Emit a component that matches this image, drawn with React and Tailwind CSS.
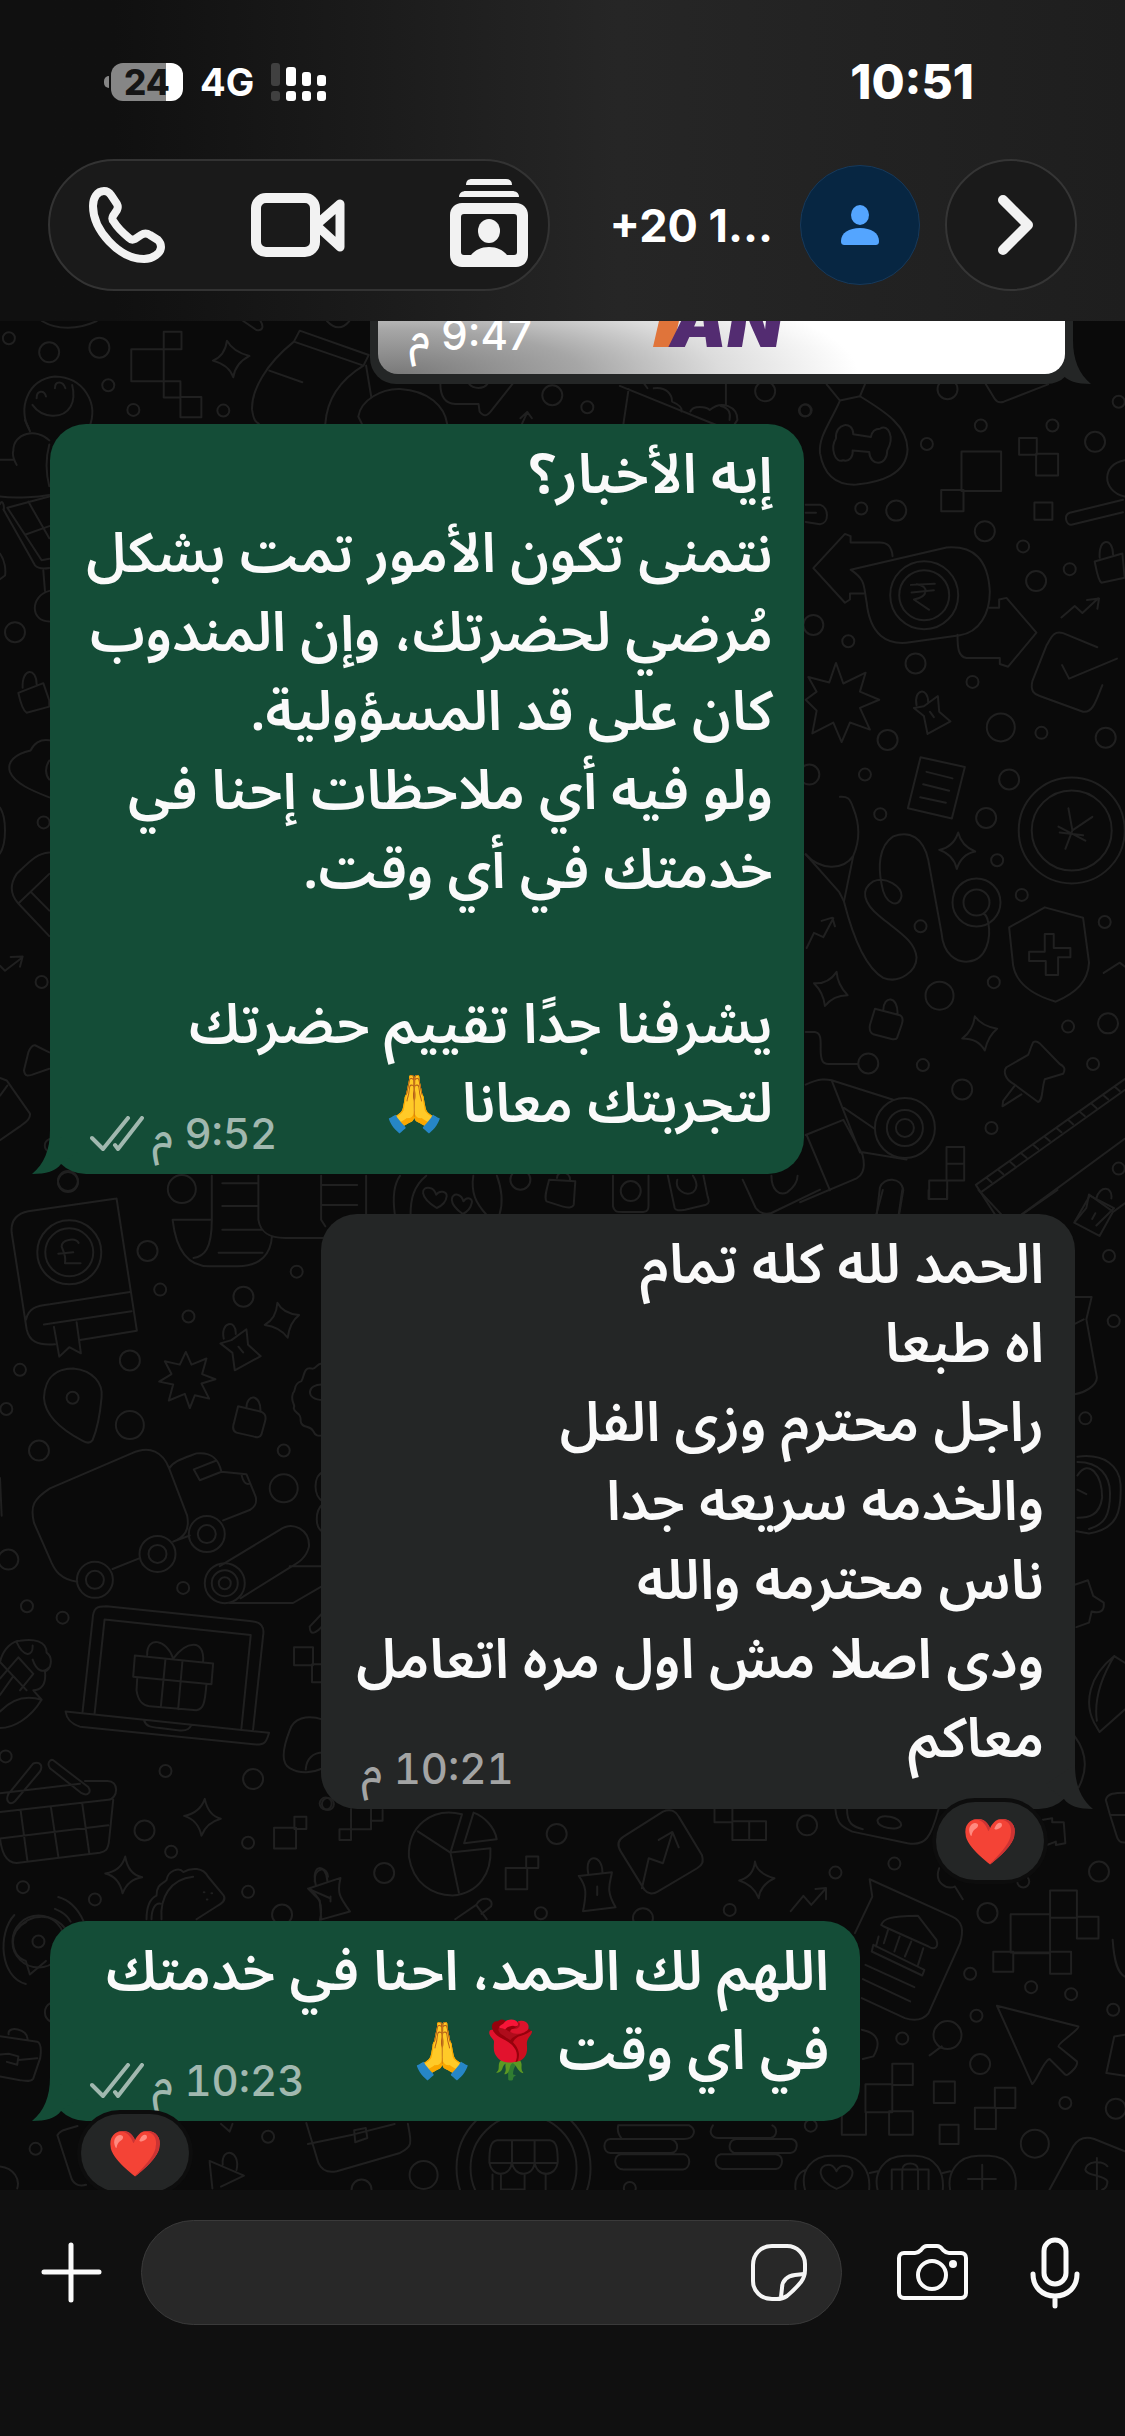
import React, { useState } from "react";

const DOT_RADIUS = { s: 6, m: 10, l: 14 };

// Wallpaper doodles, grouped in areas that each have their own origin and scale
const doodles = [
  {
    id: "right",
    x: 800,
    y: 59,
    sx: 0.333,
    sy: 0.542,
    dots: {
      s: [[17, 56], [381, 118], [543, 84], [758, 84], [957, 40], [184, 237], [670, 307], [810, 349], [145, 482], [518, 557], [725, 651], [195, 728], [241, 801], [592, 886], [666, 950], [362, 1008], [915, 1000], [582, 1111], [805, 1193], [880, 1262], [369, 1264], [575, 1380], [957, 1455]],
      m: [[443, 17], [886, 114], [289, 241], [555, 279], [709, 371], [40, 452], [347, 523], [263, 664], [918, 660], [628, 737], [559, 808], [925, 1187], [487, 1309], [205, 1261], [28, 728]],
      l: [[603, 641], [419, 1136]],
    },
    rings: [[373, 397, 34], [373, 397, 25], [816, 831, 53], [816, 831, 40], [530, 964, 24], [530, 964, 13], [315, 1380, 30], [315, 1380, 18], [315, 1380, 9]],
    paths: [
      "M120 38C90 80 55 105 60 135C70 170 100 195 170 193C240 188 320 175 323 128C322 85 260 60 180 30L120 38L80 8M180 30L195 8",
      "M160 100C160 75 105 78 108 108C90 125 105 155 130 148C150 152 160 140 158 130L208 133C210 160 262 160 262 130C285 105 265 80 240 90C220 90 215 98 213 105Z",
      "M485 132H604V205H485ZM424 203H491V242H424ZM658 107H711V138H658ZM709 136H775V176H709ZM704 226H758V258H704Z",
      "M17 230H60C88 235 88 265 60 266L17 262M17 245H48",
      "M975 148C905 155 905 205 975 215M970 221L810 245C790 250 800 268 815 267L970 244",
      "M558 8L585 35C592 42 600 42 612 40L745 8",
      "M885 335L968 320L975 365L905 374C895 370 890 350 885 335ZM900 328C895 290 940 290 940 322",
      "M278 325C275 305 260 300 240 300H152V288L135 284L40 347L135 411L150 405V394H192",
      "M152 350C200 370 190 380 200 410C210 470 260 490 330 484L480 471C540 465 570 430 570 390C565 330 520 305 440 309Z",
      "M333 378L405 376M335 392L402 388M350 377C390 380 385 400 342 405L388 424",
      "M568 420H598V405L620 402L710 466L625 529L600 524V513H500C475 510 473 495 473 470",
      "M108 522L130 560L197 540L180 575L238 590L180 605L210 645L150 632L125 668L100 632L37 652L50 610L17 590L50 575L25 548L88 558Z",
      "M342 605L372 602L414 583L418 612L452 630L383 653L372 620ZM350 600C340 570 385 565 385 595M390 612L402 622",
      "M893 493L790 467C760 462 755 475 740 490L698 555C690 575 705 580 720 583L850 612C880 615 890 590 908 563M787 526L808 551L952 514",
      "M362 696L495 714L456 809L324 790ZM380 723L458 735M370 746L448 758M361 770L438 780",
      "M806 790L818 831L878 806M818 831L797 865M776 824L857 850M780 835L850 840",
      "M475 835Q485 860 526 870Q485 875 471 902Q460 875 418 867Q460 862 475 835Z",
      "M17 875L118 945L132 962C160 1030 200 1085 250 1103C300 1115 350 1090 350 1065C345 1035 300 1020 240 990C190 965 180 940 220 925C260 915 305 935 305 952C300 975 255 970 245 930C235 900 235 860 280 842C330 830 370 845 385 885L425 1020C430 1060 470 1075 505 1073C560 1070 575 1030 565 1000C562 990 555 985 550 985",
      "M17 875C60 905 130 905 160 878C180 850 180 820 160 790C150 770 140 768 120 769M160 878L132 962",
      "M735 973L628 1010L640 1080C650 1115 700 1135 768 1147C830 1130 865 1110 868 1075L850 992ZM735 1022H762V1048H812V1065H775V1098H738V1072H688V1055H735Z",
      "M20 1048L42 1020L70 1028L100 993M65 998L97 992L105 1008M785 438L825 417L848 430L895 403M862 406L898 403L893 422M912 1094L960 1075L975 1082",
      "M110 1092Q112 1115 143 1135Q100 1135 75 1155Q70 1130 42 1113Q85 1115 110 1092ZM525 1174Q545 1192 592 1197Q565 1210 555 1237Q535 1215 487 1215Q520 1200 525 1174Z",
      "M225 1160L300 1172C312 1176 308 1185 305 1190L292 1213C290 1217 285 1217 275 1216L220 1207C208 1204 208 1198 210 1190ZM250 1163C250 1135 295 1135 293 1170",
      "M17 1203H45C65 1205 62 1220 62 1235C62 1255 68 1262 85 1262H175",
      "M700 1222C690 1235 690 1240 685 1245L620 1268C610 1275 615 1290 640 1298L715 1332C730 1330 725 1310 735 1290L790 1280C800 1270 790 1265 780 1262L720 1224C712 1220 705 1220 700 1222ZM645 1302L610 1330L608 1340L665 1318",
      "M975 1290L528 1485L588 1542M975 1310L545 1498M975 1400L665 1540M560 1472L575 1480M595 1457L610 1465M630 1442L645 1450M665 1427L680 1435M700 1411L715 1419M735 1396L750 1404M770 1380L785 1388M805 1365L820 1373M840 1350L855 1358M875 1335L890 1343M910 1319L925 1327M945 1304L960 1312",
      "M440 1415H493V1477H440ZM440 1446H493M388 1477H442V1511H388Z",
      "M17 1300C60 1288 80 1290 95 1292L280 1328M17 1393L130 1365L188 1430C200 1460 180 1470 170 1473L0 1517M95 1292L180 1425M20 1393L90 1495M132 1343L225 1382M188 1425L320 1438",
      "M230 1542L240 1490C250 1470 305 1470 310 1495L297 1542M890 1510C900 1485 940 1488 935 1510M870 1505L943 1528L890 1560M870 1505L825 1553",
    ],
  },
  {
    id: "left",
    x: 0,
    y: 869,
    sx: 0.333,
    sy: 0.472,
    dots: {
      s: [[60, 381], [19, 464], [481, 211], [566, 268], [891, 173], [852, 552], [550, 843], [81, 882], [188, 906], [17, 1200], [497, 1231], [514, 1402], [745, 1383], [745, 1487], [69, 1477], [285, 1503], [978, 1300], [218, 440]],
      m: [[443, 129], [731, 226], [390, 361], [117, 552], [25, 783], [760, 1248], [434, 1357], [847, 1535]],
      l: [[390, 498], [852, 632]],
    },
    rings: [[208, 132, 32], [208, 132, 24], [285, 826, 18], [285, 826, 9], [473, 771, 18], [473, 771, 9], [621, 729, 18], [621, 729, 9], [675, 833, 20], [675, 833, 13], [675, 833, 6]],
    paths: [
      "M350 18L85 45C50 50 32 65 35 90L80 295C88 320 110 330 165 327M350 18L411 298L240 318M78 275C85 250 110 245 150 242L390 216M132 285L395 257M162 290L178 353L208 333L243 346L230 280",
      "M236 112C225 100 185 105 185 120C190 130 200 140 195 155L242 155M175 135L220 132",
      "M132 440C135 390 180 378 220 378C280 382 310 410 305 440C300 480 290 510 278 530C270 538 260 536 250 532C190 510 135 480 132 440Z",
      "M558 343L575 370L620 357L607 390L647 401L605 410L628 442L585 435L570 462L555 432L507 446L520 412L478 406L515 390L495 363L540 370Z",
      "M662 325L695 318L740 295L745 328L783 352L705 382L698 345ZM672 315C660 280 710 272 708 305M716 332L730 344",
      "M833 239Q850 262 898 265Q870 280 864 313Q840 290 795 286Q830 272 833 239ZM615 1290Q625 1325 663 1332Q620 1340 605 1368Q595 1335 553 1326Q600 1320 615 1290ZM376 1412Q385 1450 427 1456Q385 1460 368 1490Q358 1455 316 1448Q365 1442 376 1412Z",
      "M715 458L785 470C798 474 800 480 796 490L785 518C780 526 770 524 760 522L710 514C698 510 698 504 702 495ZM740 462C740 430 785 432 782 470",
      "M970 368C950 365 950 382 935 378C910 375 915 395 905 405C880 410 890 425 880 430C870 450 890 455 882 462C885 475 905 470 903 490C905 505 930 498 940 510C950 525 960 520 970 520M970 412C920 410 915 445 970 445",
      "M232 830C180 825 165 805 155 790L102 705C90 670 100 655 150 632L395 558C450 540 490 555 508 590L562 690C570 720 555 735 520 745M338 803L420 780M508 590C520 575 545 570 590 558C630 555 655 565 665 597M665 597L600 615L582 592L650 573M665 597L740 602L768 650C772 665 765 672 750 678L670 700M520 745L570 732M725 602C730 620 740 625 750 622",
      "M660 797L840 720C880 700 930 720 928 755C920 780 895 790 870 800L722 865M690 875H880L970 838M870 797H970M970 895L930 925C930 945 950 940 970 922",
      "M248 1105L278 910C280 885 290 882 320 882L750 913C785 915 795 925 790 945L760 1143M284 1110L314 910L753 943L725 1140M197 1105L808 1150C800 1170 795 1175 770 1175L240 1137C210 1130 200 1120 197 1105ZM432 1123C440 1137 450 1138 480 1140L540 1145C565 1146 570 1140 575 1133",
      "M405 986L640 1003L635 1047L400 1031ZM412 1035L410 1060C415 1085 430 1092 450 1094L590 1102C610 1100 615 1090 620 1047M497 993L483 1095M548 997L535 1100M520 993C500 950 440 945 442 985M520 993C560 955 615 950 610 1000",
      "M0 1000C10 970 40 955 60 955C100 950 140 955 140 980C160 990 155 1015 135 1020C140 1050 120 1060 100 1060L125 1080C90 1120 40 1140 0 1140M0 1105C40 1075 80 1070 125 1080M0 1035L55 990L100 1025L60 1060M50 958C70 990 100 990 98 965M98 995C110 1020 130 1025 150 1010M0 1000L80 1060M0 1070L40 1030",
      "M0 1278L240 1258M255 1252H320C360 1250 355 1290 325 1292L0 1318M340 1292L328 1375C325 1400 315 1402 300 1404L50 1426C15 1425 5 1400 0 1375M62 1315L82 1420M153 1308L175 1412M247 1300L268 1405M0 1374L325 1346M25 1280L100 1215C120 1210 130 1220 120 1232L45 1295C30 1305 15 1295 25 1280ZM160 1208L265 1265C275 1275 265 1285 245 1278L150 1225C140 1215 150 1205 160 1208Z",
      "M883 969H940V1007H883ZM937 1005H970V1043H937ZM823 1351H889V1395H823ZM884 1328H920V1354H884Z",
      "M970 1122C920 1110 880 1120 870 1145C845 1190 845 1215 870 1225C900 1238 940 1235 970 1225M970 1192C940 1192 920 1205 918 1228",
      "M440 1545C440 1510 455 1500 470 1495C470 1470 490 1470 500 1462C505 1440 540 1435 550 1445C575 1435 610 1435 625 1455L672 1495C680 1505 665 1512 650 1518L590 1545M485 1545C480 1500 510 1460 580 1455M455 1545C455 1525 465 1510 482 1512M612 1488H614M635 1490H637M621 1503H623",
      "M50 1568C90 1530 160 1530 200 1568M175 1498C210 1505 235 1525 250 1548M165 1523C190 1530 205 1540 212 1550M990 1500L925 1480L960 1505L965 1545M945 1465C945 1430 985 1435 985 1455",
      "M0 610L5 690M970 598C940 605 940 650 970 660M970 665C945 680 945 715 970 725",
    ],
  },
  {
    id: "bottom",
    x: 300,
    y: 1469,
    sx: 0.526,
    sy: 0.333,
    dots: {
      s: [[53, 42], [458, 370], [817, 360], [1018, 248], [1130, 221], [1375, 275], [1274, 552], [1390, 592], [1466, 613], [1286, 678], [1145, 746], [1546, 660], [1455, 940], [971, 1008], [627, 1195]],
      m: [[488, 132], [160, 249], [964, 106], [1519, 245], [1307, 369], [1293, 823], [1551, 957], [652, 385], [117, 1200]],
      l: [[235, 1156], [1397, 1062], [1231, 736]],
    },
    rings: [[425, 1135, 67], [425, 1135, 53]],
    paths: [
      "M308 73C250 50 205 110 207 200C215 280 250 315 290 317C340 310 365 250 362 175L286 188L308 73M224 124L286 188L302 308M330 68L312 160L374 148C370 110 350 80 330 68Z",
      "M690 65C705 55 715 65 720 80L764 195C768 215 765 225 755 235L680 305C670 315 660 310 655 300L610 185C602 165 605 150 615 140ZM650 295L663 205L690 220L708 128M682 150L708 126L720 172",
      "M97 57V150H75V118H97M97 118H135V57M135 92H157V60M391 234H432V298H391ZM430 200H453V234H430ZM788 57V97H822V150H886V94H822M854 94V150M822 97V57",
      "M530 258L593 247C590 280 580 300 600 352L538 364C545 310 545 290 530 258ZM548 250C540 190 575 190 575 248M565 290V315M18 295L77 264C70 310 75 320 95 365L38 390C45 340 35 320 18 295ZM30 285C20 220 50 220 52 272M58 320V335M295 388L335 345L355 388M335 345C345 315 370 325 363 350L345 372",
      "M865 215Q868 250 902 265Q875 285 872 325Q862 285 835 272Q862 260 865 215ZM933 364L957 318L972 345L1000 295M980 297L1000 294V328",
      "M1018 57C1020 100 1030 110 1050 125L1155 160C1190 170 1200 140 1214 57M1040 57C1040 100 1050 110 1070 118M1098 90C1105 70 1140 80 1143 105C1140 125 1095 115 1098 90ZM1410 90L1430 85V97H1452L1455 160L1437 165V155L1420 165M1215 235C1205 280 1230 300 1245 290M1245 290L1260 328",
      "M1083 268L1088 320L1055 430M1083 268L1240 380C1260 395 1262 420 1255 460L1195 670C1185 690 1170 695 1150 685L1068 625M1105 405C1110 385 1120 380 1175 378L1210 450C1215 475 1205 480 1195 470L1110 410ZM1090 465L1187 540L1183 557L1087 485ZM1118 420L1110 460M1140 440L1130 485M1162 455L1150 500M1185 475L1175 525M1100 440L1095 470M1075 525L1168 592M1070 568L1160 635",
      "M1351 373H1426V488H1351ZM1426 302H1477V384H1426ZM1477 381H1518V446H1477ZM1318 486H1356V546H1318ZM1426 446V552H1466V486H1426M1477 384V446M1356 490H1426",
      "M1325 648L1480 710C1482 720 1440 760 1442 770L1477 815C1480 830 1460 860 1455 855L1425 808C1415 810 1400 875 1392 883Z",
      "M1126 822H1165V886H1126ZM1075 884H1126V968H1075ZM1126 884V968M1120 965H1165V1035H1120ZM1030 968V1035H1076V968M1205 875H1245V940H1205ZM1321 894H1360V955H1321ZM1283 954H1323V1018H1283ZM1216 1005H1252V1063H1216Z",
      "M1545 450C1548 520 1555 550 1568 560M1068 720C1100 730 1105 760 1090 800L1070 808M1220 770L1197 797M1568 735L1548 740L1533 850L1568 858M1568 75H1540L1532 30C1535 10 1550 8 1568 8M1540 75L1552 135C1555 155 1560 158 1568 158",
      "M12 1000L35 1120C42 1145 55 1150 70 1145L190 1090C215 1070 212 1060 205 1002M15 1063L100 1035L180 1003M103 1022L125 1015L128 1045L105 1058Z",
      "M375 1052H475C488 1055 490 1075 490 1120H360C360 1075 362 1055 375 1052ZM360 1115C362 1165 402 1165 403 1115C405 1165 446 1165 446 1115C448 1165 488 1165 490 1115M403 1052V1115M446 1052V1115M366 1155V1200M467 1155V1200M382 1158V1200H427V1158",
      "M605 1007H740C755 1020 750 1048 730 1048H612C605 1035 603 1020 605 1007M590 1048H705C720 1055 722 1088 705 1090H590C575 1088 575 1050 590 1048ZM610 1094H730C745 1100 742 1138 728 1140H615C595 1138 595 1096 610 1094ZM785 1007C775 1030 785 1045 795 1045H895C908 1040 908 1015 898 1007M830 1048H935C950 1055 945 1088 932 1090H825C812 1080 815 1050 830 1048ZM800 1094H905C922 1100 918 1135 905 1138H803C785 1132 788 1098 800 1094Z",
      "M960 1200C950 1140 975 1098 1010 1098H1030C1070 1100 1085 1150 1082 1200M1098 1200C1090 1150 1110 1098 1150 1098H1170C1210 1100 1225 1150 1222 1200M1236 1200C1230 1150 1250 1098 1290 1098H1310C1350 1100 1365 1150 1360 1200M942 1200C940 1170 945 1150 962 1140M1083 1150L1098 1145M1222 1150L1236 1145",
      "M1020 1198C980 1170 985 1125 1005 1125C1015 1125 1018 1140 1020 1145C1022 1135 1030 1125 1040 1130C1060 1140 1050 1180 1020 1198ZM1125 1200V1140H1195V1200M1145 1200V1140C1145 1115 1175 1115 1175 1140V1200M1297 1125V1200M1270 1168H1323",
      "M1425 1200L1470 1070C1480 1045 1495 1040 1510 1048L1568 1085M1515 1105V1200M1535 1130C1525 1110 1495 1115 1493 1140C1495 1160 1530 1155 1535 1175C1535 1190 1530 1198 1525 1200",
    ],
  },
  {
    id: "top",
    x: 0,
    y: -1,
    sx: 0.523,
    sy: 0.333,
    dots: {
      s: [[17, 55], [207, 196], [255, 270], [427, 272], [1123, 262], [1539, 272]],
      m: [[94, 97], [190, 83], [1056, 226], [1463, 214]],
      l: [],
    },
    rings: [],
    paths: [
      "M80 3C110 32 150 28 185 3M465 3L490 30C502 35 505 20 498 3M625 3C640 28 655 28 668 3",
      "M313 35H347V88H313ZM251 88H313V184H251ZM313 184H345V233H313ZM345 231H385V292H345Z",
      "M434 62Q445 95 477 108Q450 130 446 172Q438 135 407 122Q430 108 434 62Z",
      "M573 32L705 105L695 137L562 65ZM562 65C510 130 480 210 482 270C485 300 488 305 495 312M515 152L578 187M695 137C650 180 625 240 622 312M700 137L710 232",
      "M685 290C690 240 730 205 765 207C820 212 850 260 855 312M685 290L692 312",
      "M55 325C35 270 50 180 105 170C160 172 190 250 170 325M62 255C80 295 120 300 135 260C142 240 142 220 138 195M70 235C70 210 85 210 88 230M105 205C105 182 120 182 125 205",
      "M842 192C842 225 850 250 870 252H915L917 275C925 290 930 290 938 275L980 192M897 192C905 208 925 208 932 192",
      "M1185 198L1385 325M1202 207L1192 312M1388 192V255M1250 205C1275 200 1285 225 1285 245C1300 255 1305 265 1303 275M1320 275C1325 255 1350 260 1357 270C1380 240 1410 260 1410 300L1405 312M1378 258C1395 265 1397 280 1395 300M998 312L1008 278M995 295L1008 276L1017 295M1232 192L1238 205",
    ],
  },
  {
    id: "edge",
    x: 0,
    y: 99,
    sx: 0.333,
    sy: 0.51,
    dots: {
      s: [[131, 789], [125, 1102]],
      m: [[45, 416], [204, 1492]],
      l: [[546, 1508]],
    },
    rings: [],
    paths: [
      "M148 40C110 15 40 25 40 60C35 70 45 82 50 88M0 78H40M0 150C50 155 120 150 148 147M75 0L90 22M148 48C135 80 140 110 148 130",
      "M0 165C10 150 15 180 10 175L105 285C115 292 130 292 148 290M22 172L148 150M22 172L125 275L148 272M85 160L148 232M75 225L148 208M130 295L135 335M148 335C90 345 90 395 148 395M0 262C15 275 18 295 15 305L0 312",
      "M55 535L130 516L148 550V562L80 574C70 570 60 550 55 535ZM68 525C65 485 110 485 110 518",
      "M148 628C120 625 100 635 92 648C45 655 20 670 30 690C45 715 110 730 148 740M148 668C135 680 135 695 148 705M0 760C20 780 20 830 0 850",
      "M148 848C110 850 90 865 50 890C30 910 30 930 55 948L148 1012M55 948L148 890M92 925L148 962M0 1070L15 1080L65 1055M32 1053L68 1052L60 1072",
      "M148 1240L105 1226C95 1225 90 1232 85 1240L72 1275C75 1288 85 1286 95 1284L148 1272M0 1290L20 1295L90 1360C92 1370 80 1375 60 1385L0 1412M0 1325L22 1305M148 1410C130 1415 130 1430 148 1435",
    ],
  },
  {
    id: "middle",
    x: 0,
    y: 559,
    sx: 0.523,
    sy: 0.333,
    dots: { s: [], m: [[130, 907], [995, 900]], l: [] },
    rings: [[1206, 934, 10]],
    paths: [
      "M405 888V1020H330C335 1090 350 1160 400 1160H455C500 1160 518 1120 520 1070M405 1020C405 1110 390 1130 370 1135M494 888V1020C498 1060 515 1075 545 1075H618M425 911H494M425 979H494M425 1050H500M418 1119H502M614 888V1020L622 1040M700 888V1005M614 916H683M614 976H683",
      "M755 1005C750 950 755 910 765 888M785 1005C785 960 790 920 815 888M905 888C900 940 910 970 930 1005M950 888C960 930 962 970 955 1005M835 985C800 950 805 920 822 925C830 927 833 940 834 945C840 930 855 935 854 950C853 965 845 978 835 985ZM885 1003C855 970 862 942 875 945C883 948 885 958 886 965C892 950 905 955 902 970C900 985 895 995 885 1003Z",
      "M1050 900L1100 905L1097 975C1095 985 1085 985 1075 980L1045 965C1040 955 1045 930 1050 900ZM1065 895C1065 870 1090 875 1090 900M1172 888V980C1175 997 1180 997 1190 997H1230C1240 995 1240 985 1240 975V888M1277 888L1290 985C1292 995 1300 992 1310 990L1350 975C1358 970 1355 960 1353 950L1345 888M1295 900C1290 930 1310 950 1325 938C1335 925 1332 905 1325 888M1420 900L1445 985C1455 1005 1465 1005 1475 1000L1568 930M1475 888C1475 930 1490 950 1505 938C1520 920 1525 905 1525 888",
    ],
  },
  {
    id: "side",
    x: 300,
    y: 869,
    sx: 0.526,
    sy: 0.446,
    dots: { s: [[1538, 148], [1547, 294], [1493, 512]], m: [], l: [] },
    rings: [],
    paths: [
      "M1195 0V20H1230V0M1290 0L1335 57M1440 0L1370 57M1108 0L1095 57M1145 0L1138 57M1568 30L1545 50L1520 103L1472 73L1495 40L1500 10L1545 48M1512 52L1506 65",
      "M1473 240H1505L1495 290L1515 420C1515 440 1490 455 1473 458M1473 300L1490 290",
      "M1478 598C1530 590 1558 620 1560 660C1562 720 1555 760 1500 770L1476 765M1478 610C1520 610 1540 640 1540 680C1540 730 1530 750 1500 760M1478 640C1500 600 1525 640 1525 690C1520 730 1500 735 1478 735M1478 672L1495 682",
      "M1473 885L1498 875L1508 910L1528 925C1530 945 1520 950 1505 945L1500 970L1476 980",
      "M1548 1045C1500 1090 1490 1150 1510 1195L1520 1215L1568 1165M1548 1045C1520 1100 1510 1150 1515 1190M1548 1045L1568 1060M1473 1225C1495 1260 1498 1300 1480 1340",
    ],
  },
  {
    id: "corner",
    x: 0,
    y: 1539,
    sx: 0.574,
    sy: 0.367,
    dots: { s: [[62, 787], [467, 754]], m: [], l: [] },
    rings: [[67, 222, 6], [67, 222, 26]],
    paths: [
      "M0 480L65 495C72 500 72 520 70 540L58 595C55 605 45 602 35 600L0 590M15 475C12 450 50 460 48 490M0 530L15 528L32 535L30 558L12 550M32 545L65 540",
      "M45 170C15 190 15 260 45 275L52 312L80 275M25 150C-5 200 0 320 45 338M88 390C75 400 75 430 88 440",
      "M100 750C105 735 115 735 135 725M100 750L125 870C130 885 140 890 150 885M0 835C25 840 35 870 30 895M385 719L400 740L405 719",
      "M365 820L425 860L385 890M365 820L370 895M388 830C385 780 420 790 412 845",
    ],
  },
];

const Wallpaper = () => (
  <svg
    className="absolute inset-0 h-full w-full"
    fill="none"
    stroke="#202020"
    strokeWidth="2"
    strokeLinejoin="round"
    strokeLinecap="round"
    aria-hidden="true"
  >
    {doodles.map(({ id, x, y, sx, sy, dots, rings, paths }) => (
      <g key={id}>
        {Object.keys(dots).map((size) =>
          dots[size].map(([dx, dy]) => (
            <circle
              key={`${size}-${dx}-${dy}`}
              cx={x + dx * sx}
              cy={y + dy * sy}
              r={DOT_RADIUS[size]}
            />
          ))
        )}
        {rings.map(([dx, dy, r]) => (
          <circle
            key={`${dx}-${dy}-${r}`}
            cx={x + dx * sx}
            cy={y + dy * sy}
            r={r}
          />
        ))}
        <g transform={`translate(${x} ${y}) scale(${sx} ${sy})`}>
          {paths.map((d) => (
            <path key={d} d={d} vectorEffect="non-scaling-stroke" />
          ))}
        </g>
      </g>
    ))}
  </svg>
);

const PhoneIcon = () => (
  <svg width="76" height="76" viewBox="0 0 76 76" fill="none" stroke="#f2f2f2" strokeWidth="8" strokeLinejoin="round">
    <path d="M15 4C8 4 4 11 4 19C4 43 30 72 55 72C64 72 72 66 72 60C72 57 71 55 69 53L61 48C58 46 55 46 52 48L46 52C44 53 42 53 40 51C34 46 28 40 25 35C23 33 23 31 24 29L28 23C29 21 29 19 28 17L22 8C20 5 18 4 15 4Z" />
  </svg>
);

const VideoIcon = () => (
  <svg width="94" height="64" viewBox="0 0 94 64" fill="none" stroke="#f2f2f2" strokeLinejoin="round">
    <rect x="5" y="5" width="59" height="54" rx="10" strokeWidth="10" />
    <path d="M65 32L89 11V54Z" strokeWidth="9" />
  </svg>
);

const ContactsIcon = () => (
  <svg width="78" height="88" viewBox="0 0 78 88" fill="#f2f2f2">
    <path d="M16 6C16 2 18 0 22 0H56C60 0 62 2 62 6Z" />
    <path d="M9 18C9 14 12 12 16 12H62C66 12 69 14 69 18Z" />
    <path
      fillRule="evenodd"
      d="M12 24H66C73 24 78 29 78 36V76C78 83 73 88 66 88H12C5 88 0 83 0 76V36C0 29 5 24 12 24ZM14 35C12 35 11 36 11 38V73C11 75 12 76 14 76H21C25 71 31 68 39 68C47 68 53 71 57 76H64C66 76 67 75 67 73V38C67 36 66 35 64 35Z"
    />
    <ellipse cx="39" cy="52" rx="11" ry="12" />
  </svg>
);

const PersonIcon = () => (
  <svg width="38" height="40" viewBox="0 0 38 40" fill="#54a5ff">
    <ellipse cx="19" cy="10" rx="9" ry="10" />
    <path d="M0 36C0 28 8 23 19 23C30 23 38 28 38 36C38 39 37 40 34 40H4C1 40 0 39 0 36Z" />
  </svg>
);

const SignalIcon = () => (
  <svg width="55" height="38" viewBox="0 0 55 38" fill="white">
    <g fill="#404040">
      <rect width="9" height="23" rx="3" />
      <rect y="28" width="9" height="10" rx="3" />
    </g>
    <rect x="15" y="4" width="10" height="19" rx="3" />
    <rect x="15" y="28" width="10" height="10" rx="3" />
    <rect x="31" y="9" width="9" height="14" rx="3" />
    <rect x="31" y="28" width="9" height="10" rx="3" />
    <rect x="46" y="12" width="9" height="11" rx="3" />
    <rect x="46" y="28" width="9" height="10" rx="3" />
  </svg>
);

const StickerIcon = () => (
  <svg width="57" height="57" viewBox="0 0 57 57" fill="none" stroke="#f5f5f5" strokeWidth="4" strokeLinejoin="round">
    <path d="M21 2H36C46 2 54 10 54 20V26C54 31 53 34 50 38C45 44 41 48 36 52C33 54 30 55 26 55H21C10 55 2 47 2 37V21C2 10 10 2 21 2Z" />
    <path d="M53 30L44 31C36 32 31 37 31 44L30 53" />
  </svg>
);

const CameraIcon = () => (
  <svg width="72" height="57" viewBox="0 0 72 57" fill="none" stroke="#fafafa" strokeWidth="4">
    <path d="M7 9H18C21 9 22 8 24 6C26 3 27 2 30 2H40C43 2 44 3 46 6C48 8 49 9 52 9H64C67 9 69 11 69 14V49C69 52 67 54 64 54H7C4 54 2 52 2 49V14C2 11 4 9 7 9Z" />
    <circle cx="35" cy="31" r="14" />
    <circle cx="56" cy="20" r="4" fill="#fafafa" stroke="none" />
  </svg>
);

const MicIcon = () => (
  <svg width="50" height="72" viewBox="0 0 50 72" fill="none" stroke="#fafafa" strokeWidth="5" strokeLinecap="round">
    <rect x="14" y="3" width="22" height="44" rx="11" />
    <path d="M3 37C3 50 12 59 25 59C38 59 47 50 47 37M25 59V69" />
  </svg>
);

const ReadTicks = () => (
  <svg width="54" height="36" viewBox="0 0 54 36" fill="none" stroke="#a1b8af" strokeWidth="4" strokeLinecap="round" strokeLinejoin="round">
    <path d="M2 22L13 33L38 2M25 29L28 33L52 2" />
  </svg>
);

const Tail = ({ sent }) => (
  <svg
    width="48"
    height="44"
    viewBox="0 0 48 44"
    className={
      sent
        ? "absolute bottom-0 -left-[18px] fill-[#144d37]"
        : "absolute bottom-0 -right-[18px] -scale-x-100 fill-[#242626]"
    }
    aria-hidden="true"
  >
    <path d="M18 0C18 20 12 34 0 44C14 44 24 41 29 34L48 20Z" />
  </svg>
);

const messages = [
  {
    id: 1,
    sent: true,
    width: "w-[67%]",
    spacing: "mt-10",
    paragraphs: [
      [
        "إيه الأخبار؟",
        "نتمنى تكون الأمور تمت بشكل",
        "مُرضي لحضرتك، وإن المندوب",
        "كان على قد المسؤولية.",
        "ولو فيه أي ملاحظات إحنا في",
        "خدمتك في أي وقت.",
      ],
      ["يشرفنا جدًا تقييم حضرتك", "لتجربتك معانا 🙏"],
    ],
    time: "9:52 م",
  },
  {
    id: 2,
    sent: false,
    width: "w-[67%]",
    spacing: "mt-10",
    paragraphs: [
      [
        "الحمد لله كله تمام",
        "اه طبعا",
        "راجل محترم وزى الفل",
        "والخدمه سريعه جدا",
        "ناس محترمه والله",
        "ودى اصلا مش اول مره اتعامل",
        "معاكم",
      ],
    ],
    time: "10:21 م",
    reaction: "❤️",
  },
  {
    id: 3,
    sent: true,
    width: "w-[72%]",
    spacing: "mt-28",
    paragraphs: [["اللهم لك الحمد، احنا في خدمتك", "في اي وقت 🌹🙏"]],
    time: "10:23 م",
    reaction: "❤️",
  },
];

const Message = ({ message }) => {
  const { sent, width, spacing, paragraphs, time, reaction } = message;
  return (
    <div
      className={`relative mx-[50px] grid grid-cols-1 rounded-[36px] pt-3 pr-[31px] pb-5 pl-10 ${width} ${spacing} ${
        sent ? "self-start bg-[#144d37]" : "self-end bg-[#242626]"
      }`}
    >
      <Tail sent={sent} />
      <div
        dir="rtl"
        className="relative col-start-1 row-start-1 flex flex-col gap-19 pb-[10px] font-['Noto_Sans_Arabic','Noto_Sans',sans-serif] text-[55px] leading-[79px] font-semibold whitespace-nowrap text-[#fafafa]"
      >
        {paragraphs.map((lines) => (
          <p key={lines[0]}>
            {lines.map((line) => (
              <span key={line} className="block">
                {line}
              </span>
            ))}
          </p>
        ))}
      </div>
      {/* shares the grid cell with the text, so it sits beside the last line */}
      <div
        dir="rtl"
        className={`relative col-start-1 row-start-1 flex items-center gap-2 self-end justify-self-start text-[42px] leading-10 tabular-nums ${
          sent ? "text-[#a1b8af]" : "text-[#a3a4a4]"
        }`}
      >
        <time>{time}</time>
        {sent && <ReadTicks />}
      </div>
      {reaction && (
        <button
          type="button"
          aria-label="التفاعلات"
          className={`absolute -bottom-[71px] flex h-[78px] w-[108px] items-center justify-center rounded-[39px] bg-[#242626] text-[45px] ring-4 ring-[#0d0d0d] ${
            sent ? "left-[31px]" : "right-[31px]"
          }`}
        >
          {reaction}
        </button>
      )}
    </div>
  );
};

// Photo message scrolled under the header, only its lower edge is visible
const PhotoMessage = () => (
  <div className="relative mx-[52px] w-[703px] self-end rounded-b-[26px] bg-[#242626] px-2 pb-[10px]">
    <Tail />
    <div className="relative flex h-[53px] items-start overflow-hidden rounded-b-[20px] bg-[radial-gradient(460px_110px_at_20px_100%,#7a7a7a_0%,#a6a6a6_40%,#dcdcdc_70%,#ffffff_100%)]">
      <time
        dir="rtl"
        className="-mt-1.5 ml-6 w-[130px] text-right text-[42px] leading-10 whitespace-nowrap text-white"
      >
        9:47 م
      </time>
      <svg width="140" height="26" viewBox="0 0 140 26" className="ml-[121px]" aria-label="AN">
        <path d="M6 0H26L20 26H0Z" fill="#e0743a" />
        <text
          x="17"
          y="26"
          fill="#532c71"
          fontFamily="Inter, sans-serif"
          fontSize="72"
          fontWeight="900"
          fontStyle="italic"
        >
          AN
        </text>
      </svg>
    </div>
  </div>
);

const App = () => {
  const [text, setText] = useState("");

  return (
    <div className="flex min-h-screen flex-col bg-[#0a0a0a] font-['Inter','Noto_Sans_Arabic',sans-serif] font-medium text-white">
      <header className="relative z-10 bg-linear-to-r from-[#101010] from-10% via-[#262626] via-55% to-[#1e1e1e] px-12 pb-[30px]">
        <div className="flex h-[159px] items-center justify-between pt-[58px] pr-[103px] pb-[53px] pl-14">
          <div className="flex items-center">
            <span className="mr-[2px] h-3 w-[5px] rounded-l-full bg-[#868686]" />
            <span className="flex h-[38px] w-[72px] items-center justify-center rounded-[12px] bg-[linear-gradient(to_right,#868686_76%,#ffffff_76%)] text-[35px] leading-none font-extrabold text-[#151515]">
              24
            </span>
            <span className="ml-[17px] text-[38px] leading-none font-bold">
              4G
            </span>
            <span className="ml-[17px]">
              <SignalIcon />
            </span>
          </div>
          <span className="text-[48px] leading-none font-extrabold">10:51</span>
        </div>

        <div className="flex items-center">
          <div className="flex h-[132px] items-center rounded-full border-2 border-[#333333] bg-[#1a1a1a] pr-5 pl-[39px]">
            <button type="button" aria-label="مكالمة صوتية">
              <PhoneIcon />
            </button>
            <button type="button" aria-label="مكالمة فيديو" className="ml-[86px]">
              <VideoIcon />
            </button>
            <button type="button" aria-label="جهات الاتصال" className="mb-1 ml-[105px]">
              <ContactsIcon />
            </button>
          </div>
          <h1 className="ml-auto text-[45px] leading-none font-bold whitespace-nowrap">
            +20 1...
          </h1>
          <span className="ml-[27px] flex size-[120px] items-center justify-center rounded-full border border-[#17395a] bg-[#072642]">
            <PersonIcon />
          </span>
          <button
            type="button"
            aria-label="رجوع"
            className="ml-[25px] flex size-[132px] items-center justify-center rounded-full border-2 border-[#353535] bg-[#1a1a1a] pl-2"
          >
            <svg width="37" height="60" viewBox="0 0 37 60" fill="none" stroke="#f2f2f2" strokeWidth="10" strokeLinecap="round" strokeLinejoin="round">
              <path d="M6 5L31 30L6 55" />
            </svg>
          </button>
        </div>
      </header>

      <main className="relative flex-1 overflow-hidden">
        <Wallpaper />
        <div className="relative flex flex-col">
          <PhotoMessage />
          {messages.map((message) => (
            <Message key={message.id} message={message} />
          ))}
        </div>
      </main>

      <footer className="relative bg-[#101010] pt-[30px] pr-[45px] pb-[111px] pl-[41px]">
        <form className="flex items-center" onSubmit={(e) => e.preventDefault()}>
          <button type="button" aria-label="إرفاق" className="shrink-0">
            <svg width="61" height="61" viewBox="0 0 61 61" fill="none" stroke="#fafafa" strokeWidth="5" strokeLinecap="round">
              <path d="M3 30H58M30 3V58" />
            </svg>
          </button>
          <div className="ml-[39px] flex h-[105px] min-w-0 flex-1 items-center rounded-full border border-[#3a3a3a] bg-[#282828] pr-[33px] pl-10">
            <input
              type="text"
              dir="auto"
              aria-label="رسالة"
              className="min-w-0 flex-1 bg-transparent text-[48px] outline-none"
              value={text}
              onChange={(e) => setText(e.target.value)}
            />
            <button type="button" aria-label="ملصقات" className="shrink-0">
              <StickerIcon />
            </button>
          </div>
          <button type="button" aria-label="الكاميرا" className="ml-[55px] shrink-0">
            <CameraIcon />
          </button>
          <button type="button" aria-label="تسجيل صوتي" className="ml-[61px] shrink-0">
            <MicIcon />
          </button>
        </form>
      </footer>
    </div>
  );
};

export default App;
